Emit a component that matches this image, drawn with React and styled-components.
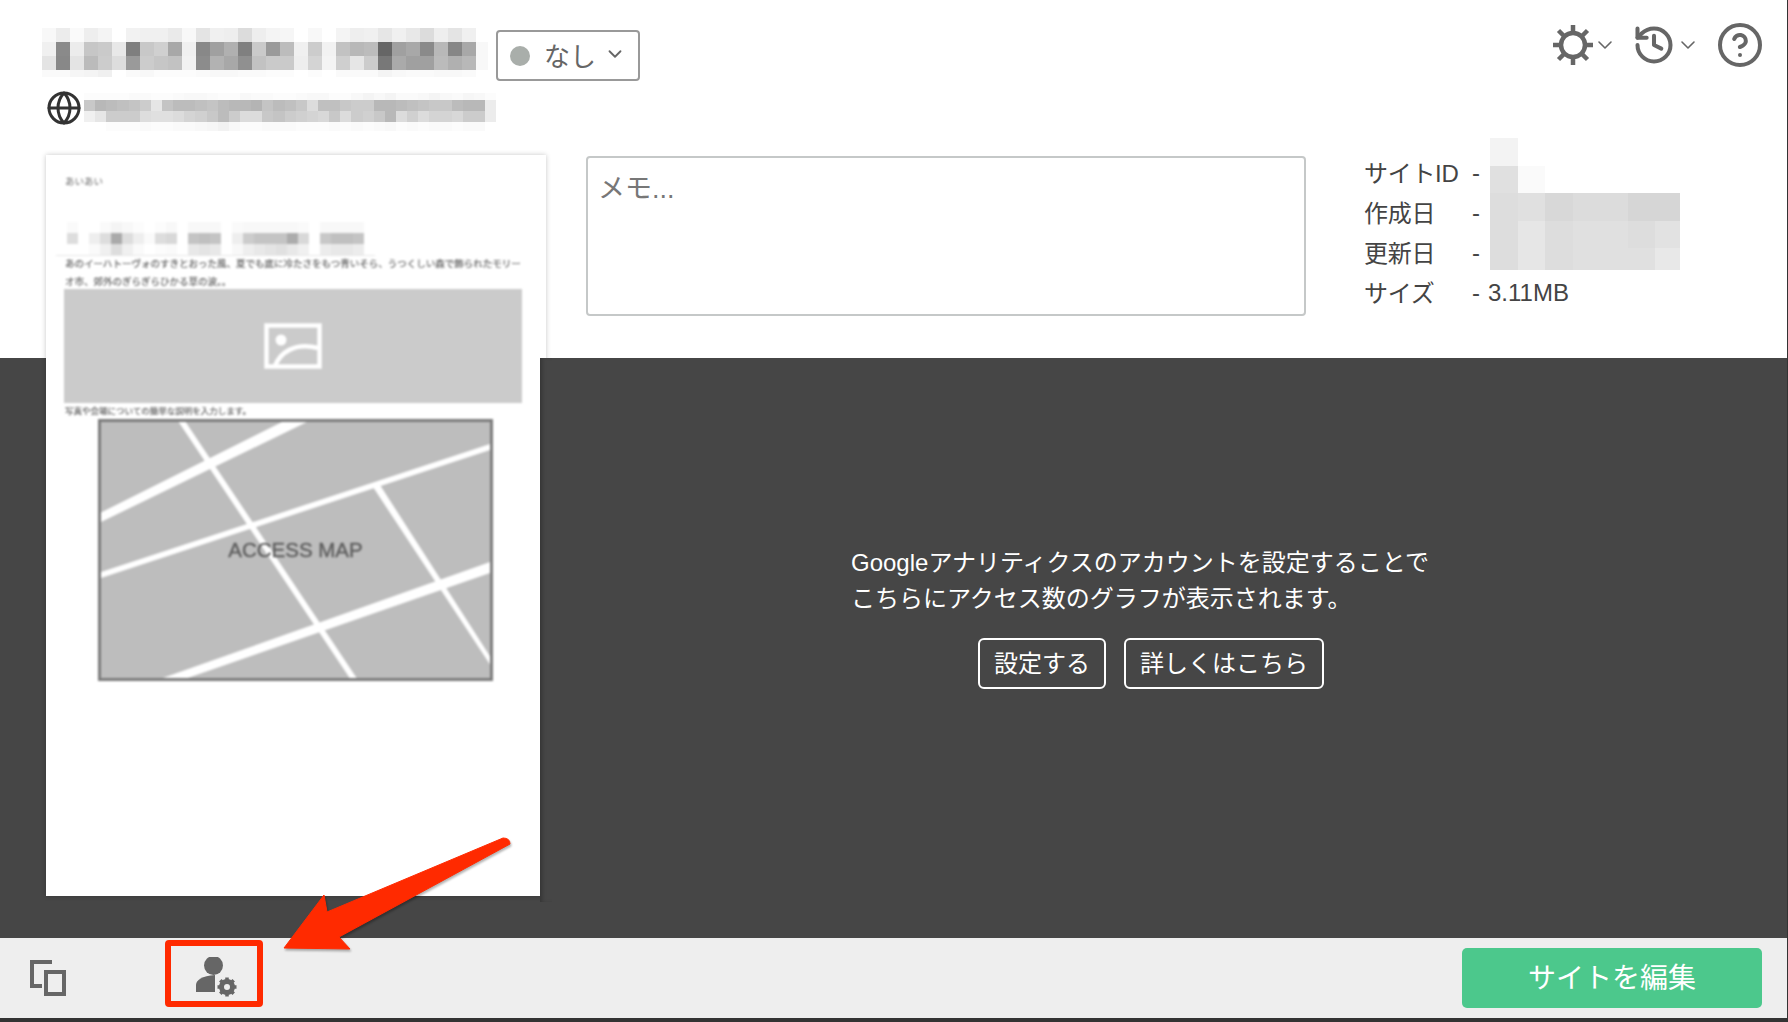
import React from 'react'
import styled, { createGlobalStyle } from 'styled-components'
import { ChevronDown, CircleHelp, Globe, History } from 'lucide-react'

const GlobalStyle = createGlobalStyle`
  html, body {
    margin: 0;
    background: #333;
  }
  * {
    box-sizing: border-box;
  }
  body {
    font-family: "Liberation Sans", "Noto Sans CJK JP", sans-serif;
    color: #444;
  }
`

// blurred-out values in the screenshot, one token per cell (grey as hex)
const TITLE = [
  'f8 ec fa ee f4 ff f2 f0 f0 ea f8 e4 f0 ee dc ee f4 f6 ff f8 ff f4 ee f0 e6 f0 e8 dc ee e4 f0 ff',
  'f0 8a ec c6 ca e8 7f c8 d0 a8 f0 88 a0 b0 80 ca 9a bc f0 cc f2 c2 b8 bc 66 a0 a8 8a b8 86 a8 f8',
  'e4 88 e4 bb cc dd 9a cc c6 c2 f2 8c b2 a8 90 c2 ca ca ee d4 f4 cf e6 cc 78 aa a0 a0 bb b0 b8 f8',
  'fa fa f6 f4 f0 ff fa f8 fc fc fc fa f8 f8 fa fa fc fc ff fc ff fa fa fa f4 f8 fa fa f8 f8 fa ff',
]
const URL_LINE = [
  'fc fc fc fc fa fa fc fc fa f8 f8 fa fc fc f8 fa fa fc fc fa f8 f8 fc fc f8 f4 f8 f4 fa fa f8 f4 f8 fa f6 f8 fc',
  'c8 b8 bc c0 c4 cc e6 c4 bc bc c0 c4 bc b8 b8 b4 c4 bc c0 c8 dc c0 c0 c8 cc cc b8 b8 bc c0 c4 c8 c8 bc b8 b8 ec',
  'f0 e6 cc cc cc dd e0 e0 dc d4 d0 c8 bc cc dc dc c8 c4 cc d0 d4 d8 c8 dc cc d0 c8 b8 dc d0 dc d4 d4 d8 cc cc ec',
  'ff ff fc fc fc fa fc fc fa fa f8 f6 f2 f8 fc fc fa fa fa fc fc fc fa fc fa fc fa f8 fc fa fc fa fa fc fa fa ff',
]
const HEADING = [
  'ff fa ff ff fa f4 f8 fc ff fc f8 ff f8 f8 f8 ff fa f8 f8 f8 f8 f8 fa ff f8 f8 f8 f8 ff',
  'ff dd ff ee dd aa dd ee fa dd d8 ff c4 c0 c4 ff ee cc c4 c4 c4 ac d8 ff c8 c0 c0 c4 ff',
  'ff ff ff fa f0 dd f0 fa ff fc fa ff e8 e4 e8 ff f8 ee e8 e4 e0 e8 f0 ff ec e8 e8 ec ff',
]
const SITE_INFO = [
  'f3 ff ff ff ff ff ff',
  'e0 fa ff ff ff ff ff',
  'dd e0 d8 dc dc d6 d6',
  'dd e6 dd e0 e0 dd e2',
  'dd e6 dd e0 e0 e0 e8',
]

function Mosaic({ rows, cell, width, height, cropTop = 0 }) {
  return (
    <svg width={width} height={height} viewBox={`0 ${cropTop} ${width} ${height}`} shapeRendering="crispEdges">
      {rows.map((row, y) =>
        row.split(' ').map((v, x) => (
          <rect key={x} x={x * cell} y={y * cell} width={cell} height={cell} fill={`#${v.repeat(3)}`} />
        ))
      )}
    </svg>
  )
}

const SunIcon = () => (
  <svg width="40" height="40" viewBox="0 0 40 40" fill="none" stroke="#666" strokeWidth="4.500">
    <circle cx="20" cy="20" r="12" />
    <path d="M20 0v7M20 33v7M0 20h7M33 20h7M5.500 5.500l5 5M29.500 29.500l5 5M34.500 5.500l-5 5M10.500 29.500l-5 5" />
  </svg>
)

const DevicesIcon = () => (
  <svg width="36" height="36" viewBox="0 0 36 36" fill="none" stroke="#666" strokeWidth="4">
    <path d="M22 2H2v24h10" />
    <rect x="16" y="12" width="18" height="22" />
  </svg>
)

const UserGearIcon = () => (
  <svg width="42" height="42" viewBox="0 0 42 42" fill="#666">
    <circle cx="17.500" cy="8.500" r="9.500" />
    <path d="M0 35v-7c0-5 6-9 19-10v17z" />
    <circle cx="31" cy="30" r="11" fill="#eee" />
    <g fill="none" stroke="#666">
      <circle cx="31" cy="30" r="5.500" strokeWidth="5" />
      <path strokeWidth="3.500" d="M31 20.500v19M21.500 30h19M24.300 23.300l13.400 13.400M37.700 23.300L24.300 36.700" strokeDasharray="3.500 12" />
    </g>
  </svg>
)

const PictureIcon = () => (
  <svg width="58" height="46" viewBox="0 0 58 46" fill="none" stroke="#fff" strokeWidth="4.500">
    <rect x="2.500" y="2.500" width="53" height="41" />
    <circle cx="17" cy="17" r="5.500" fill="#fff" stroke="none" />
    <path d="M11 43C16 30 30 19 54 25" />
  </svg>
)

const Page = styled.div`
  position: relative;
  display: flex;
  flex-direction: column;
  width: 1787px;
  height: 1022px;
  padding-bottom: 4px;
  background: #333;
  overflow: hidden;
`

const Top = styled.section`
  height: 358px;
  padding: 21px 23px 0 42px;
  background: #fff;
`

const Header = styled.div`
  display: flex;
  align-items: flex-start;
  height: 72px;
`

const TitleBlur = styled.div`
  margin-top: 7px;
  line-height: 0;
`

const Select = styled.div`
  display: flex;
  align-items: center;
  width: 144px;
  height: 51px;
  margin: 9px 0 0 8px;
  padding: 0 0 3px 12px;
  border: 2px solid #999;
  border-radius: 4px;
  font-size: 26px;
  color: #666;
`

const Dot = styled.span`
  width: 20px;
  height: 20px;
  margin: 3px 14px 0 0;
  border-radius: 50%;
  background: #a9aeaa;
`

const SelectChevron = styled(ChevronDown)`
  margin-left: 8px;
`

const Tools = styled.div`
  display: flex;
  align-items: center;
  height: 48px;
  margin-left: auto;
`

const HelpIcon = styled(CircleHelp)`
  margin-left: 16px;
`

const HistoryIcon = styled(History)`
  margin-left: 15px;
`

const UrlRow = styled.div`
  display: flex;
  align-items: flex-start;
  gap: 2px;
  height: 38px;
  padding-left: 4px;
  line-height: 0;
`

const GlobeIcon = styled(Globe)`
  margin-top: -3px;
`

const Details = styled.div`
  display: flex;
  align-items: flex-start;
  margin-top: 25px;
  padding-left: 544px;
`

const Memo = styled.textarea`
  width: 720px;
  height: 160px;
  padding: 9px 10px;
  border: 2px solid #c5c8c8;
  border-radius: 4px;
  outline: none;
  resize: none;
  font: 27px "Liberation Sans", "Noto Sans CJK JP", sans-serif;
  &::placeholder {
    color: #777;
    opacity: 1;
  }
`

const InfoTable = styled.dl`
  position: relative;
  display: grid;
  grid-template-columns: 108px 16px auto;
  grid-auto-rows: 40px;
  align-items: center;
  margin: -3px 0 0 58px;
  font-size: 24px;
  color: #444;
  dt, dd {
    margin: 0;
  }
  dt {
    padding-bottom: 4px;
    letter-spacing: -0.3px;
  }
`

const InfoBlur = styled.div`
  position: absolute;
  left: 126px;
  top: -15px;
  line-height: 0;
`

const Dark = styled.section`
  flex: 1;
  display: flex;
  flex-direction: column;
  align-items: flex-start;
  padding: 187px 0 0 851px;
  background: #464646;
  color: #fff;
`

const Message = styled.p`
  margin: 0;
  font-size: 24px;
  line-height: 36px;
  white-space: nowrap;
`

const Buttons = styled.div`
  display: flex;
  gap: 18px;
  margin: 21px 0 0 127px;
`

const OutlineButton = styled.button`
  height: 51px;
  padding: 0 14px 4px;
  border: 2px solid #fff;
  border-radius: 6px;
  background: transparent;
  color: #fff;
  font: 24px "Liberation Sans", "Noto Sans CJK JP", sans-serif;
`

const Footer = styled.footer`
  display: flex;
  align-items: center;
  height: 80px;
  padding: 0 25px 0 30px;
  background: #eee;
`

const UserButton = styled.div`
  display: flex;
  margin-left: 130px;
`

const EditButton = styled.button`
  width: 300px;
  height: 60px;
  margin-left: auto;
  padding-bottom: 5px;
  border: none;
  border-radius: 5px;
  background: #4cc88c;
  color: #fff;
  font: 28px "Liberation Sans", "Noto Sans CJK JP", sans-serif;
`

// the page thumbnail lies across the white and the dark section
const Thumb = styled.div`
  position: absolute;
  left: 46px;
  top: 155px;
  width: 500px;
  height: 741px;
  background: #fff;
  box-shadow: 0 0 5px rgba(0, 0, 0, 0.22);
  &::after {
    content: '';
    position: absolute;
    left: 494px;
    right: -6px;
    top: 203px;
    bottom: -6px;
    background: #464646;
    box-shadow: inset 4px 0 4px -2px rgba(0, 0, 0, 0.25);
  }
`

const Preview = styled.div`
  padding: 21px 24px 0 18px;
  filter: blur(0.9px);
  font-size: 9.500px;
  color: #666;
`

const Tiny = styled.div`
  height: 12px;
  line-height: 12px;
  padding-left: 1px;
`

const HeadingBlur = styled.div`
  width: 319px;
  height: 34px;
  margin: 34px 0 0 -8px;
  border-bottom: 1px solid #e8e8e8;
  line-height: 0;
`

const Paragraph = styled.p`
  height: 34px;
  margin: -1px -2px 0 0;
  padding-left: 1px;
  line-height: 18px;
  -webkit-text-stroke: 0.2px #666;
`

const Placeholder = styled.div`
  display: flex;
  align-items: center;
  justify-content: center;
  height: 114px;
  background: #cbcbcb;
`

const Caption = styled.div`
  height: 16px;
  padding-left: 1px;
  line-height: 16px;
  font-size: 8.500px;
  -webkit-text-stroke: 0.2px #666;
`

const Map = styled.div`
  position: relative;
  display: flex;
  align-items: center;
  justify-content: center;
  width: 395px;
  height: 262px;
  margin-left: 34px;
  border: 3px solid #7c7c7c;
  background: #bdbdbd;
`

const MapRoads = styled.svg`
  position: absolute;
  inset: 0;
  width: 100%;
  height: 100%;
`

const MapLabel = styled.span`
  position: relative;
  top: 0;
  font-size: 20.500px;
  color: #5e5e5e;
  -webkit-text-stroke: 0.4px #5e5e5e;
`

const Annotation = styled.svg`
  position: absolute;
  left: 0;
  top: 0;
  pointer-events: none;
`

export default function App() {
  return (
    <Page>
      <GlobalStyle />
      <Top>
        <Header>
          <TitleBlur>
            <Mosaic rows={TITLE} cell={14} width={446} height={49} />
          </TitleBlur>
          <Select>
            <Dot />
            なし
            <SelectChevron size={22} color="#666" strokeWidth={2} />
          </Select>
          <Tools>
            <SunIcon />
            <ChevronDown size={24} color="#666" strokeWidth={1.6} />
            <HistoryIcon size={44} color="#666" strokeWidth={2.2} />
            <ChevronDown size={24} color="#666" strokeWidth={1.6} />
            <HelpIcon size={48} color="#666" strokeWidth={2} />
          </Tools>
        </Header>
        <UrlRow>
          <GlobeIcon size={36} color="#333" strokeWidth={2} />
          <Mosaic rows={URL_LINE} cell={11.14} width={412} height={38} cropTop={4} />
        </UrlRow>
        <Details>
          <Memo placeholder="メモ..." />
          <InfoTable>
            <dt>サイトID</dt><dd>-</dd><dd></dd>
            <dt>作成日</dt><dd>-</dd><dd></dd>
            <dt>更新日</dt><dd>-</dd><dd></dd>
            <dt>サイズ</dt><dd>-</dd><dd>3.11MB</dd>
            <InfoBlur>
              <Mosaic rows={SITE_INFO} cell={27.5} width={190} height={132} />
            </InfoBlur>
          </InfoTable>
        </Details>
      </Top>
      <Dark>
        <Message>
          Googleアナリティクスのアカウントを設定することで
          <br />
          こちらにアクセス数のグラフが表示されます。
        </Message>
        <Buttons>
          <OutlineButton>設定する</OutlineButton>
          <OutlineButton>詳しくはこちら</OutlineButton>
        </Buttons>
      </Dark>
      <Footer>
        <DevicesIcon />
        <UserButton>
          <UserGearIcon />
        </UserButton>
        <EditButton>サイトを編集</EditButton>
      </Footer>
      <Thumb>
        <Preview>
          <Tiny>あいあい</Tiny>
          <HeadingBlur>
            <Mosaic rows={HEADING} cell={11} width={319} height={33} />
          </HeadingBlur>
          <Paragraph>
            あのイーハトーヴォのすきとおった風、夏でも底に冷たさをもつ青いそら、うつくしい森で飾られたモリーオ市、郊外のぎらぎらひかる草の波。。
          </Paragraph>
          <Placeholder>
            <PictureIcon />
          </Placeholder>
          <Caption>写真や会場についての簡単な説明を入力します。</Caption>
          <Map>
            <MapRoads viewBox="3 3 389 256" preserveAspectRatio="none" fill="#fff">
              <path d="M0 95L186 2h25L0 104.500z" />
              <path d="M80 2h7l173 259h-7z" />
              <path d="M0 154L395 24v6L0 160z" />
              <path d="M275 68l7-2 113 176v8z" />
              <path d="M59 261L395 142v11L84 261z" />
            </MapRoads>
            <MapLabel>ACCESS MAP</MapLabel>
          </Map>
        </Preview>
      </Thumb>
      <Annotation width="1787" height="1022" viewBox="0 0 1787 1022">
        <rect x="168" y="943" width="92" height="61" rx="1" fill="none" stroke="#ff2a00" strokeWidth="6" />
        <path
          d="M284 948L324 895L327 912L503 838Q510 838 510 844L339 937L350 949z"
          fill="#ff2a00"
          stroke="#ff2a00"
          strokeLinejoin="round"
          style={{ filter: 'drop-shadow(1px 2px 1px rgba(0,0,0,.3))' }}
        />
      </Annotation>
    </Page>
  )
}
